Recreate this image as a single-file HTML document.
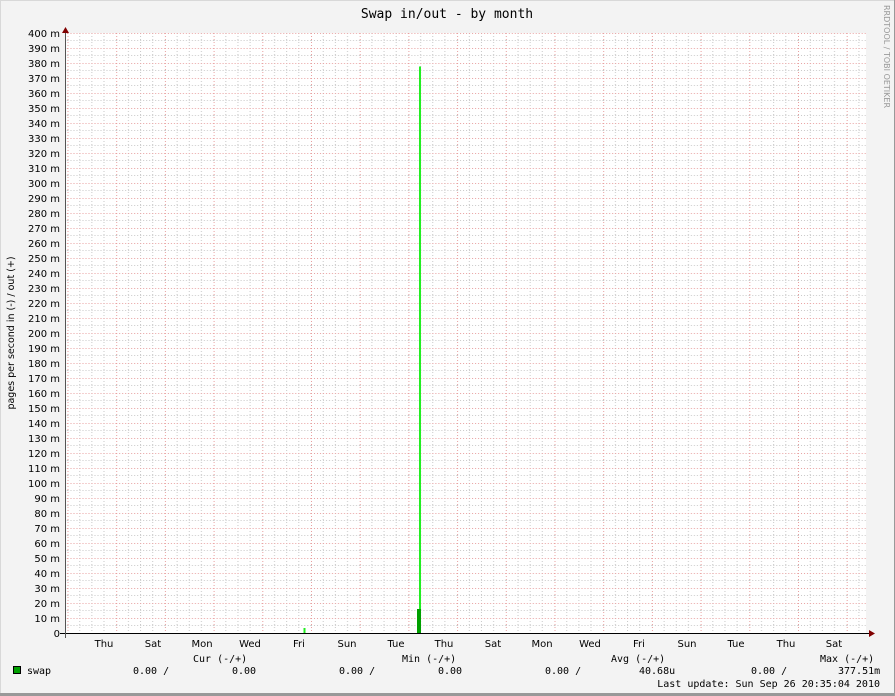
<!DOCTYPE html>
<html><head><meta charset="utf-8"><style>
html,body{margin:0;padding:0;background:#f3f3f3}
svg{display:block}
.ax{font-family:"DejaVu Sans","Liberation Sans",sans-serif;font-size:10px;fill:#000}
.mono{font-family:"DejaVu Sans Mono","Liberation Mono",monospace;font-size:10px;fill:#000;white-space:pre}
</style></head><body>
<svg width="895" height="696" viewBox="0 0 895 696" xmlns="http://www.w3.org/2000/svg">
<defs>
<pattern id="g" patternUnits="userSpaceOnUse" x="67.5" y="33" width="48.7" height="15">
<line x1="0" y1="7.5" x2="48.7" y2="7.5" stroke="#c8c8c8" stroke-width="1" stroke-dasharray="1,2"/>
<line x1="12.2" y1="0" x2="12.2" y2="15" stroke="#c8c8c8" stroke-width="1" stroke-dasharray="1,2"/>
<line x1="24.35" y1="0" x2="24.35" y2="15" stroke="#c8c8c8" stroke-width="1" stroke-dasharray="1,2"/>
<line x1="36.5" y1="0" x2="36.5" y2="15" stroke="#c8c8c8" stroke-width="1" stroke-dasharray="1,2"/>
<line x1="0" y1="0.5" x2="48.7" y2="0.5" stroke="#e8a0a0" stroke-width="1" stroke-dasharray="1,2"/>
<line x1="0.5" y1="0" x2="0.5" y2="15" stroke="#e8a0a0" stroke-width="1" stroke-dasharray="1,2"/>
</pattern>
</defs>
<rect x="0" y="0" width="895" height="696" fill="#f3f3f3"/>
<rect x="0.5" y="0.5" width="894" height="695" fill="none" stroke="#d8d8d8"/>
<line x1="894.5" y1="0" x2="894.5" y2="696" stroke="#999" stroke-width="1"/>
<line x1="0" y1="694.5" x2="895" y2="694.5" stroke="#999" stroke-width="3"/>
<rect x="65" y="33" width="801" height="600" fill="#fff"/>
<rect x="66" y="33" width="800" height="600" fill="url(#g)"/>
<text x="447" y="18" text-anchor="middle" class="mono" style="font-size:13px">Swap in/out - by month</text>
<text transform="translate(884,5) rotate(90)" style="font-family:'DejaVu Sans','Liberation Sans',sans-serif;font-size:8px;fill:#999">RRDTOOL / TOBI OETIKER</text>
<text transform="translate(14,333) rotate(-90)" text-anchor="middle" class="ax" style="font-size:9.5px">pages per second in (-) / out (+)</text>
<g class="ax" text-anchor="end">
<text x="60" y="37">400 m</text><text x="60" y="52">390 m</text><text x="60" y="67">380 m</text><text x="60" y="82">370 m</text><text x="60" y="97">360 m</text><text x="60" y="112">350 m</text><text x="60" y="127">340 m</text><text x="60" y="142">330 m</text><text x="60" y="157">320 m</text><text x="60" y="172">310 m</text><text x="60" y="187">300 m</text><text x="60" y="202">290 m</text><text x="60" y="217">280 m</text><text x="60" y="232">270 m</text><text x="60" y="247">260 m</text><text x="60" y="262">250 m</text><text x="60" y="277">240 m</text><text x="60" y="292">230 m</text><text x="60" y="307">220 m</text><text x="60" y="322">210 m</text><text x="60" y="337">200 m</text><text x="60" y="352">190 m</text><text x="60" y="367">180 m</text><text x="60" y="382">170 m</text><text x="60" y="397">160 m</text><text x="60" y="412">150 m</text><text x="60" y="427">140 m</text><text x="60" y="442">130 m</text><text x="60" y="457">120 m</text><text x="60" y="472">110 m</text><text x="60" y="487">100 m</text><text x="60" y="502">90 m</text><text x="60" y="517">80 m</text><text x="60" y="532">70 m</text><text x="60" y="547">60 m</text><text x="60" y="562">50 m</text><text x="60" y="577">40 m</text><text x="60" y="592">30 m</text><text x="60" y="607">20 m</text><text x="60" y="622">10 m</text><text x="60" y="637">0</text>
</g>
<g class="ax" text-anchor="middle">
<text x="104" y="647">Thu</text><text x="153" y="647">Sat</text><text x="202" y="647">Mon</text><text x="250" y="647">Wed</text><text x="299" y="647">Fri</text><text x="347" y="647">Sun</text><text x="396" y="647">Tue</text><text x="444" y="647">Thu</text><text x="493" y="647">Sat</text><text x="542" y="647">Mon</text><text x="590" y="647">Wed</text><text x="639" y="647">Fri</text><text x="687" y="647">Sun</text><text x="736" y="647">Tue</text><text x="786" y="647">Thu</text><text x="834" y="647">Sat</text>
</g>
<rect x="303.5" y="628" width="2" height="5" fill="#22ee22"/>
<rect x="419" y="66.5" width="2" height="567" fill="#22ee22"/>
<rect x="417" y="609" width="4" height="24" fill="#00a000"/>
<line x1="60" y1="633.5" x2="870" y2="633.5" stroke="#000" stroke-width="1"/>
<line x1="65.5" y1="30" x2="65.5" y2="638" stroke="#555" stroke-width="1"/>
<polygon points="62,33 69,33 65.5,27" fill="#800000"/>
<polygon points="869,630 869,637 875,633.5" fill="#800000"/>
<g class="mono">
<text x="193" y="662">Cur (-/+)</text>
<text x="402" y="662">Min (-/+)</text>
<text x="611" y="662">Avg (-/+)</text>
<text x="820" y="662">Max (-/+)</text>
<text x="27" y="674">swap</text>
<text x="133" y="674">0.00 /</text>
<text x="232" y="674">0.00</text>
<text x="339" y="674">0.00 /</text>
<text x="438" y="674">0.00</text>
<text x="545" y="674">0.00 /</text>
<text x="639" y="674">40.68u</text>
<text x="751" y="674">0.00 /</text>
<text x="838" y="674">377.51m</text>
<text x="880" y="687" text-anchor="end">Last update: Sun Sep 26 20:35:04 2010</text>
</g>
<rect x="13.5" y="666.5" width="7" height="7" fill="#00a000" stroke="#000"/>
</svg>
</body></html>
